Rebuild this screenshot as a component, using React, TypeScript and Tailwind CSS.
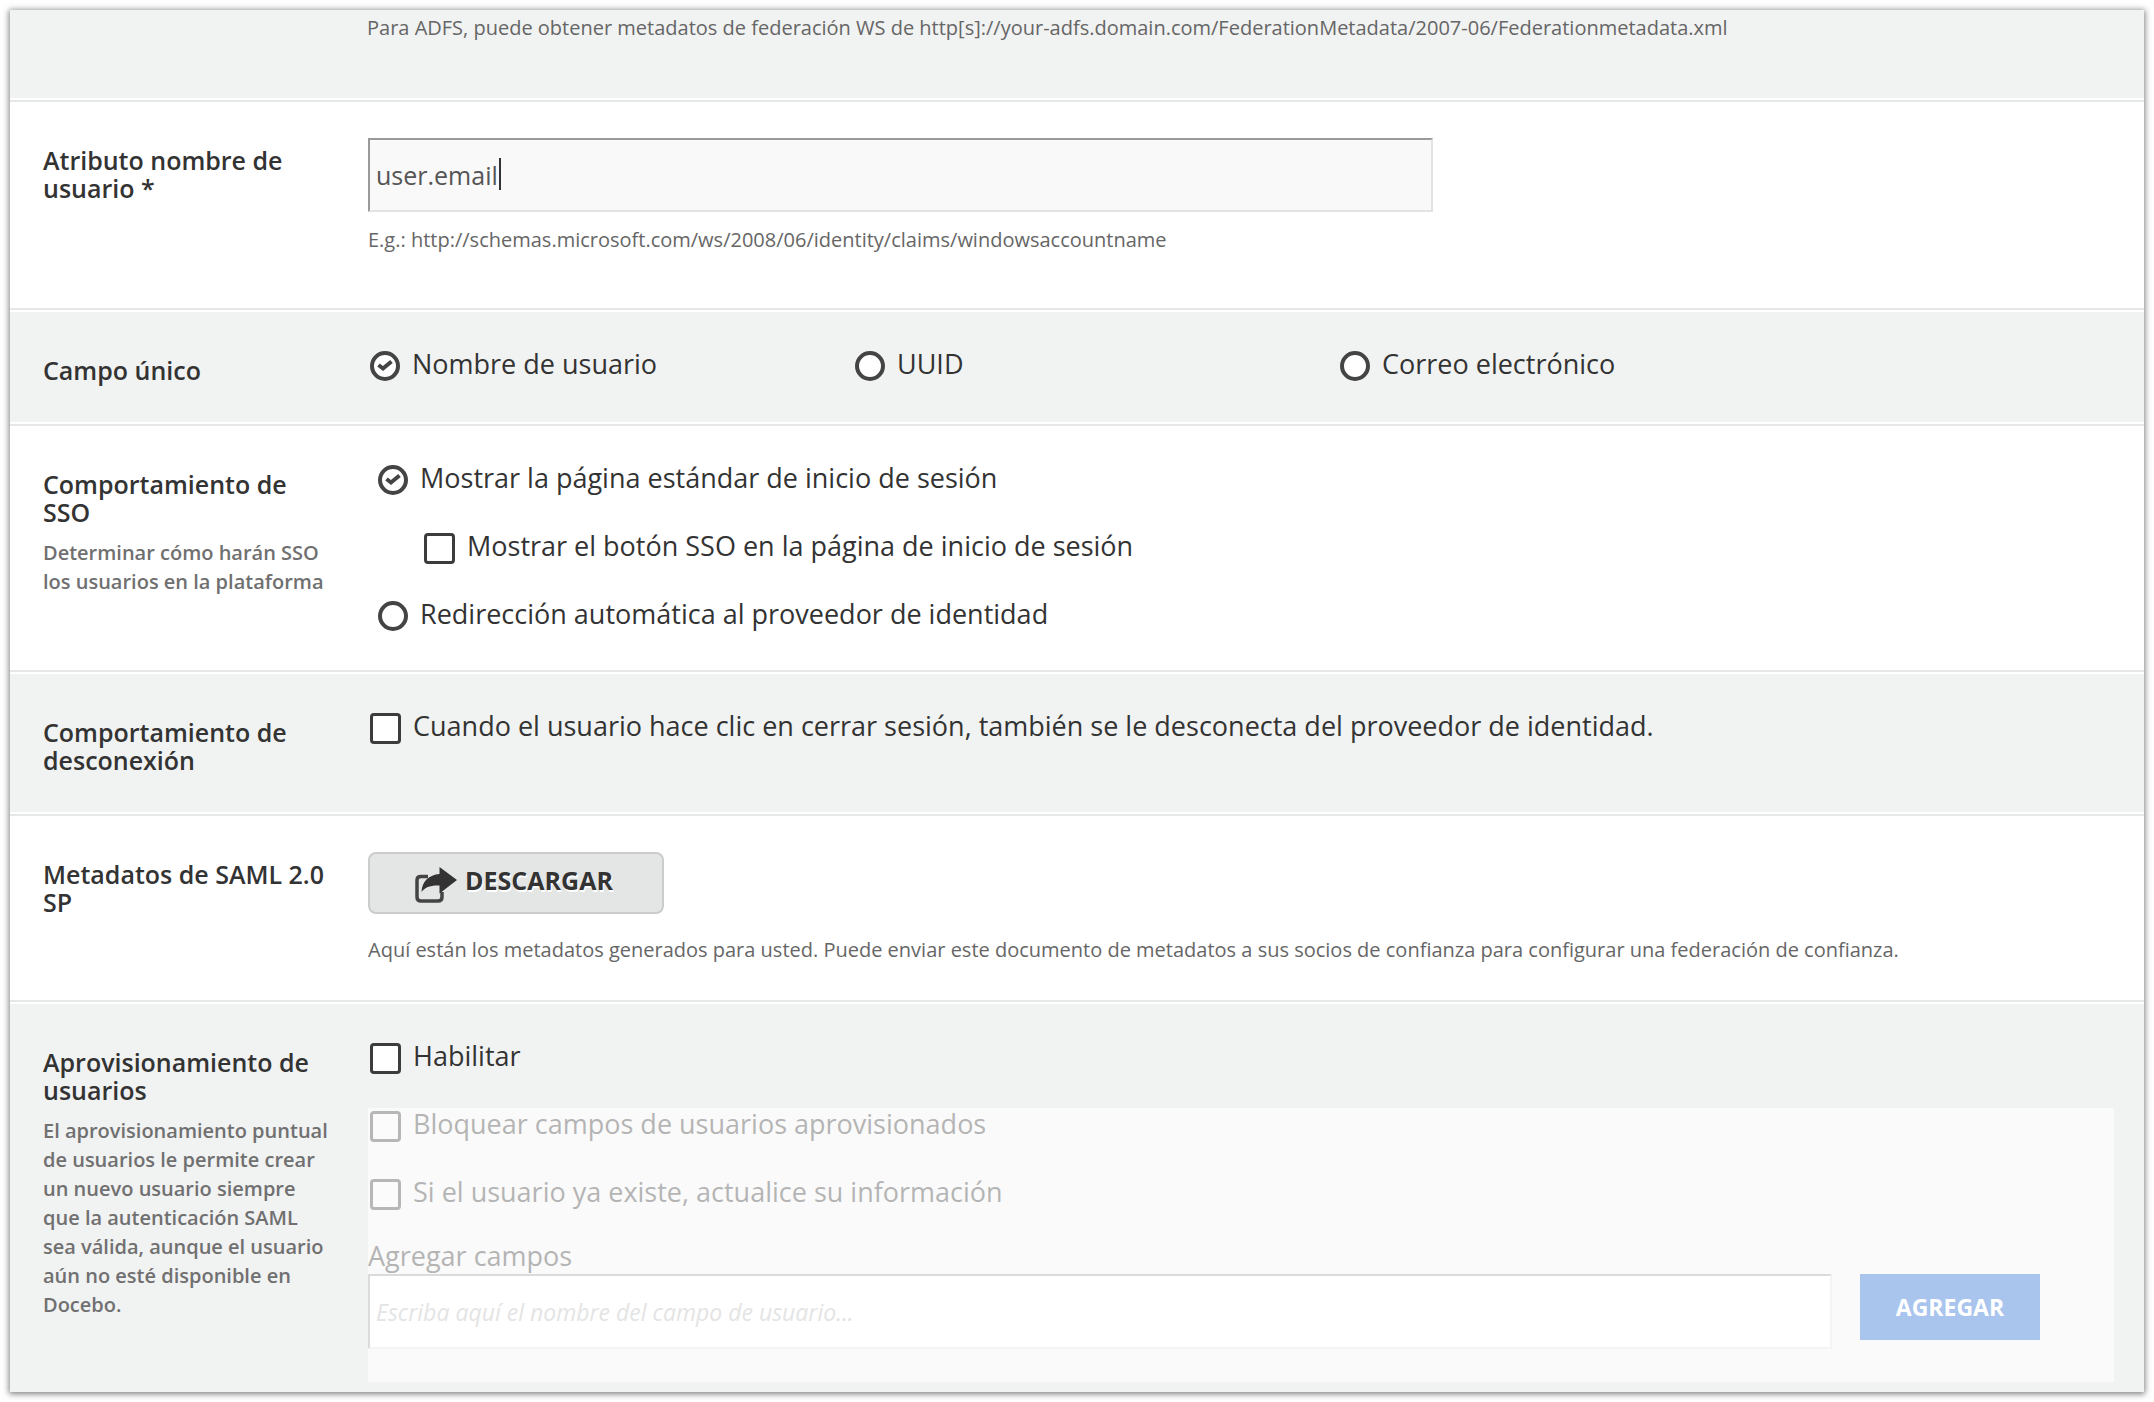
import React from "react";

interface RowProps {
    label: string;
    htmlFor?: string;
    help?: string;
    className: string;
    children: React.ReactNode;
}

interface OptionProps {
    id: string;
    label: string;
    name?: string;
    checked?: boolean;
    disabled?: boolean;
}

const Row: React.FC<RowProps> = ({ label, htmlFor, help, className, children }) => {
    return (
        <section>
            <div className={`flex border-white pr-[30px] pl-[33px] ${className}`}>
                <div className="w-[325px] shrink-0 pt-11 pr-[35px]">
                    <label htmlFor={htmlFor} className="block text-[25px] leading-7 font-semibold text-[#333333]">
                        {label}
                    </label>
                    {help && (
                        <p className="mt-3 text-xl leading-[29px] font-semibold text-[#707070]">{help}</p>
                    )}
                </div>
                <div className="min-w-0 flex-1">{children}</div>
            </div>
        </section>
    );
};

const RadioOption: React.FC<OptionProps> = ({ id, label, name, checked }) => {
    return (
        <div className="flex items-center gap-3">
            <span className="mt-1 grid size-[30px] shrink-0">
                <input
                    type="radio"
                    id={id}
                    name={name}
                    defaultChecked={checked}
                    className="peer col-start-1 row-start-1 size-[30px] appearance-none rounded-full border-4 border-[#444444] bg-white"
                />
                <svg
                    viewBox="0 0 30 30"
                    className="pointer-events-none invisible col-start-1 row-start-1 size-[30px] peer-checked:visible"
                    fill="none"
                    stroke="#444444"
                    strokeWidth="4"
                >
                    <path d="M8.5 14L13 17.5L21.5 10.5" />
                </svg>
            </span>
            <label htmlFor={id} className="text-[27px] leading-9 text-[#333333]">
                {label}
            </label>
        </div>
    );
};

const CheckOption: React.FC<OptionProps> = ({ id, label, disabled }) => {
    return (
        <div className="flex items-center gap-3">
            <input
                type="checkbox"
                id={id}
                disabled={disabled}
                className="mt-1 size-[31px] shrink-0 appearance-none rounded-sm border-[3px] border-[#3c3c3c] bg-white checked:bg-[#3c3c3c]"
            />
            <label htmlFor={id} className="text-[27px] leading-9 text-[#333333]">
                {label}
            </label>
        </div>
    );
};

const ShareIcon = () => (
    <svg viewBox="0 0 42 36" className="mt-2 h-9 w-[42px]" fill="none">
        <path d="M13 9.5H6Q2 9.5 2 13V30Q2 34 6 34H23Q27 34 27 30V25" stroke="#444444" strokeWidth="3.5" />
        <path d="M24.5 0L42 13L24.5 26.5V18.5C16 18 10 20 6.5 25C7 14 14 8 24.5 7Z" fill="#333333" />
    </svg>
);

const App: React.FC = () => {
    return (
        <div className="min-h-screen bg-white p-[10px] font-['Open_Sans',sans-serif]">
            <main className="divide-y-2 divide-[#e6e7e7] shadow-[0_1px_6px_1px_rgba(0,0,0,0.5)]">
                <section>
                    <p className="border-b-2 border-white bg-[#f1f2f2] pt-1 pb-14 pl-[357px] text-xl leading-7 text-[#666666]">
                        Para ADFS, puede obtener metadatos de federación WS de
                        http[s]://your-adfs.domain.com/FederationMetadata/2007-06/Federationmetadata.xml
                    </p>
                </section>

                <Row label="Atributo nombre de usuario *" htmlFor="usernameAttribute" className="bg-white pb-[54px]">
                    <div className="relative mt-9 w-[61%]">
                        <input
                            id="usernameAttribute"
                            type="text"
                            defaultValue="user.email"
                            className="h-[74px] w-full border-2 border-t-[#999999] border-r-[#e3e3e3] border-b-[#e3e3e3] border-l-[#999999] bg-[#f9f9f9] px-1.5 text-[25px] text-[#555555] outline-none"
                        />
                        <span className="absolute top-5 left-[131px] h-8 w-0.5 bg-[#333333]" />
                    </div>
                    <p className="mt-3.5 text-xl leading-7 text-[#666666]">
                        E.g.: http://schemas.microsoft.com/ws/2008/06/identity/claims/windowsaccountname
                    </p>
                </Row>

                <Row label="Campo único" className="border-y-2 bg-[#f1f2f2] pb-[38px]">
                    <div className="ml-[2px] grid w-5/6 grid-cols-3 pt-[34px]">
                        <RadioOption id="fieldUsername" name="uniqueField" label="Nombre de usuario" checked />
                        <RadioOption id="fieldUuid" name="uniqueField" label="UUID" />
                        <RadioOption id="fieldEmail" name="uniqueField" label="Correo electrónico" />
                    </div>
                </Row>

                <Row
                    label="Comportamiento de SSO"
                    help="Determinar cómo harán SSO los usuarios en la plataforma"
                    className="bg-white pb-[38px]"
                >
                    <div className="flex flex-col gap-8 pt-[34px] pl-[10px]">
                        <RadioOption
                            id="ssoStandard"
                            name="ssoBehavior"
                            label="Mostrar la página estándar de inicio de sesión"
                            checked
                        />
                        <div className="pl-[46px]">
                            <CheckOption
                                id="ssoButton"
                                label="Mostrar el botón SSO en la página de inicio de sesión"
                            />
                        </div>
                        <RadioOption
                            id="ssoRedirect"
                            name="ssoBehavior"
                            label="Redirección automática al proveedor de identidad"
                        />
                    </div>
                </Row>

                <Row label="Comportamiento de desconexión" className="border-y-2 bg-[#f1f2f2] pb-[38px]">
                    <div className="pt-[34px] pl-[2px]">
                        <CheckOption
                            id="logout"
                            label="Cuando el usuario hace clic en cerrar sesión, también se le desconecta del proveedor de identidad."
                        />
                    </div>
                </Row>

                <Row label="Metadatos de SAML 2.0 SP" htmlFor="downloadMetadata" className="bg-white pb-9">
                    <button
                        id="downloadMetadata"
                        type="button"
                        className="mt-9 flex h-[62px] w-[296px] items-center justify-center gap-2 rounded-lg border-2 border-[#cccccc] bg-[#e4e5e5] pr-1 pb-1 text-[25px] font-bold text-[#333333] [text-shadow:1px_2px_0_#ffffff]"
                    >
                        <ShareIcon />
                        DESCARGAR
                    </button>
                    <p className="mt-[22px] text-xl leading-7 text-[#666666]">
                        Aquí están los metadatos generados para usted. Puede enviar este documento de metadatos a sus
                        socios de confianza para configurar una federación de confianza.
                    </p>
                </Row>

                <Row
                    label="Aprovisionamiento de usuarios"
                    htmlFor="provisioning"
                    help="El aprovisionamiento puntual de usuarios le permite crear un nuevo usuario siempre que la autenticación SAML sea válida, aunque el usuario aún no esté disponible en Docebo."
                    className="border-t-2 bg-[#f1f2f2] pb-[10px]"
                >
                    <div className="pt-[34px] pl-[2px]">
                        <CheckOption id="provisioning" label="Habilitar" />
                    </div>
                    <div className="mt-[34px] flex flex-col bg-[#fafafa] pb-[33px]">
                        <div className="-mt-0.5 opacity-35">
                            <div className="flex flex-col gap-8 pl-[2px]">
                                <CheckOption
                                    id="lockFields"
                                    label="Bloquear campos de usuarios aprovisionados"
                                    disabled
                                />
                                <CheckOption
                                    id="updateUser"
                                    label="Si el usuario ya existe, actualice su información"
                                    disabled
                                />
                            </div>
                            <label htmlFor="addFields" className="mt-7 block text-[27px] leading-9 text-[#333333]">
                                Agregar campos
                            </label>
                        </div>
                        <div className="flex items-start gap-7 pr-[74px]">
                            <input
                                id="addFields"
                                type="text"
                                disabled
                                placeholder="Escriba aquí el nombre del campo de usuario..."
                                className="h-[75px] min-w-0 flex-1 border-2 border-t-[#dbdbdb] border-r-[#f4f4f4] border-b-[#f4f4f4] border-l-[#dbdbdb] bg-white px-1.5 text-[23px] italic placeholder:text-[#e4e4e4]"
                            />
                            <button
                                type="button"
                                disabled
                                className="h-[66px] w-[180px] bg-[#a9c4ed] text-[23px] font-bold text-white"
                            >
                                AGREGAR
                            </button>
                        </div>
                    </div>
                </Row>
            </main>
        </div>
    );
};

export default App;
